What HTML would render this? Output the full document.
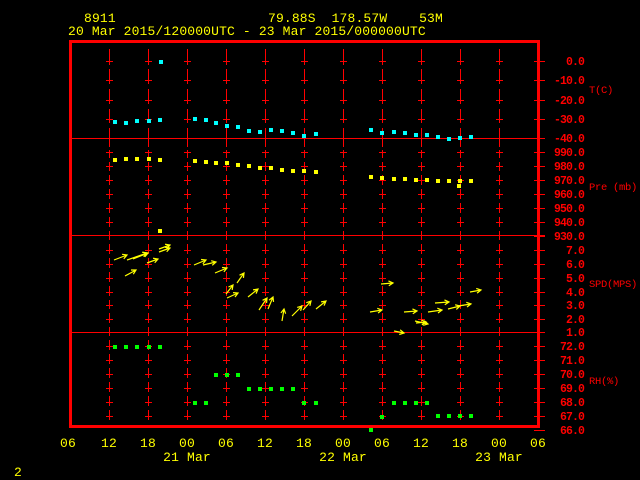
<!DOCTYPE html>
<html><head><meta charset="utf-8"><style>
html,body{margin:0;padding:0;background:#000;width:640px;height:480px;overflow:hidden}
svg{display:block}
text{font-family:"Liberation Mono",monospace;font-size:13px;white-space:pre;letter-spacing:0.15px}
.y{fill:#ffff00}.r{fill:#ff0000}
.v text{font-size:11.5px;letter-spacing:-0.9px;font-weight:bold}
.l text{font-size:10.5px;letter-spacing:-0.3px}
</style></head><body>
<svg id="s" width="640" height="480" xmlns="http://www.w3.org/2000/svg" xml:space="preserve">
<g id="grid" stroke="#ff0000" stroke-width="1"></g>
<rect x="70.5" y="41.5" width="468" height="385" fill="none" stroke="#ff0000" stroke-width="3"/>
<line x1="70" y1="138.5" x2="545" y2="138.5" stroke="#ff0000"/>
<line x1="70" y1="235.5" x2="545" y2="235.5" stroke="#ff0000"/>
<line x1="70" y1="332.5" x2="545" y2="332.5" stroke="#ff0000"/>
<g id="pts"></g>
<g id="arr" stroke="#ffff00" stroke-width="1.2" fill="none"></g>
<text class="y" x="84" y="22">8911</text>
<text class="y" x="268" y="22">79.88S  178.57W    53M</text>
<text class="y" x="68" y="35">20 Mar 2015/120000UTC - 23 Mar 2015/000000UTC</text>
<g class="r v" text-anchor="end">
<text x="584" y="65">0.0</text><text x="584" y="84">-10.0</text><text x="584" y="104">-20.0</text><text x="584" y="123">-30.0</text><text x="584" y="142">-40.0</text>
<text x="584" y="156">990.0</text><text x="584" y="170">980.0</text><text x="584" y="184">970.0</text><text x="584" y="198">960.0</text><text x="584" y="212">950.0</text><text x="584" y="226">940.0</text><text x="584" y="240">930.0</text>
<text x="584" y="254">7.0</text><text x="584" y="268">6.0</text><text x="584" y="282">5.0</text><text x="584" y="296">4.0</text><text x="584" y="309">3.0</text><text x="584" y="323">2.0</text><text x="584" y="336">1.0</text>
<text x="584" y="350">72.0</text><text x="584" y="364">71.0</text><text x="584" y="378">70.0</text><text x="584" y="392">69.0</text><text x="584" y="406">68.0</text><text x="584" y="420">67.0</text><text x="584" y="434">66.0</text>
</g>
<g class="r l">
<text x="589" y="93">T(C)</text><text x="589" y="190">Pre (mb)</text><text x="589" y="287">SPD(MPS)</text><text x="589" y="384">RH(%)</text>
</g>
<g class="y" text-anchor="middle">
<text x="68" y="447">06</text><text x="109" y="447">12</text><text x="148" y="447">18</text><text x="187" y="447">00</text><text x="226" y="447">06</text><text x="265" y="447">12</text><text x="304" y="447">18</text><text x="343" y="447">00</text><text x="382" y="447">06</text><text x="421" y="447">12</text><text x="460" y="447">18</text><text x="499" y="447">00</text><text x="538" y="447">06</text>
<text x="187" y="461">21 Mar</text><text x="343" y="461">22 Mar</text><text x="499" y="461">23 Mar</text>
</g>
<text class="y" x="14" y="476">2</text>
</svg>
<script>
var ns="http://www.w3.org/2000/svg";
function el(p,t,a){var e=document.createElementNS(ns,t);for(var k in a)e.setAttribute(k,a[k]);p.appendChild(e);return e;}
var g=document.getElementById('grid');
var ticks=[61,80,100,119,152,166,180,194,208,222,250,264,278,292,305,319,346,360,374,388,402,416];
var allT=ticks.concat([138,236,332]);
for(var k=1;k<=11;k++){var x=70+39*k+0.5;
 var segs=[[49,65],[69,84],[89,104],[109,123],[128,147],[150,158],[162,171],[175,185],[189,199],[203,213],[217,227],[231,240],[244,254],[258,268],[272,282],[286,296],[300,309],[313,323],[327,336],[340,350],[354,364],[368,378],[382,392],[396,406],[410,420]];
 segs.forEach(function(s){el(g,'line',{x1:x,y1:s[0],x2:x,y2:s[1]});});
 ticks.forEach(function(t){el(g,'line',{x1:x-3.5,y1:t+.5,x2:x+3.5,y2:t+.5});});
}
allT.concat([430]).forEach(function(t){el(g,'line',{x1:534,y1:t+.5,x2:545,y2:t+.5});});
var P=document.getElementById('pts');
function sq(c,list){list.forEach(function(p){el(P,'rect',{x:p[0]-2,y:p[1]-2,width:4,height:4,fill:c});});}
sq('#00ffff',[[115,122],[126,123],[137,121],[149,121],[160,120],[161,62],[195,119],[206,120],[216,123],[227,126],[238,127],[249,131],[260,132],[271,130],[282,131],[293,133],[304,136],[316,134],[371,130],[382,133],[394,132],[405,133],[416,135],[427,135],[438,137],[449,139],[460,138],[471,137]]);
sq('#ffff00',[[115,160],[126,159],[137,159],[149,159],[160,160],[160,231],[195,161],[206,162],[216,163],[227,163],[238,165],[249,166],[260,168],[271,168],[282,170],[293,171],[304,171],[316,172],[371,177],[382,178],[394,179],[405,179],[416,180],[427,180],[438,181],[449,181],[460,181],[459,186],[471,181]]);
sq('#00ff00',[[115,347],[126,347],[137,347],[149,347],[160,347],[195,403],[206,403],[216,375],[227,375],[238,375],[249,389],[260,389],[271,389],[282,389],[293,389],[304,403],[316,403],[371,430],[382,417],[394,403],[405,403],[416,403],[427,403],[438,416],[449,416],[460,416],[471,416]]);
var A=document.getElementById('arr');
var arrows=[[114,260,127,255],[127,260,147,253],[133,259,148,253],[147,263,158,259],[125,276,136,270],[159,252,170,248],[159,249,170,245],[194,265,206,260],[203,265,216,262],[215,273,227,268],[237,283,244,273],[226,294,233,285],[227,298,238,293],[248,297,258,289],[259,310,267,298],[268,309,273,297],[282,321,284,309],[292,316,302,306],[303,310,311,301],[316,309,326,301],
[381,284,393,283],[370,312,382,310],[404,312,417,311],[416,323,426,322],[435,303,449,302],[428,312,442,310],[448,309,460,306],[458,306,471,304],[470,292,481,290],[394,331,404,333],[415,321,428,324]];
arrows.forEach(function(a){var dx=a[2]-a[0],dy=a[3]-a[1],L=Math.hypot(dx,dy),ux=dx/L,uy=dy/L,h=5;
 var c=Math.cos(0.5),s=Math.sin(0.5);
 var x1=a[2]-h*(ux*c-uy*s),y1=a[3]-h*(uy*c+ux*s),x2=a[2]-h*(ux*c+uy*s),y2=a[3]-h*(uy*c-ux*s);
 el(A,'path',{d:'M'+a[0]+' '+a[1]+'L'+a[2]+' '+a[3]+'M'+x1+' '+y1+'L'+a[2]+' '+a[3]+'L'+x2+' '+y2});});
</script>
</body></html>
